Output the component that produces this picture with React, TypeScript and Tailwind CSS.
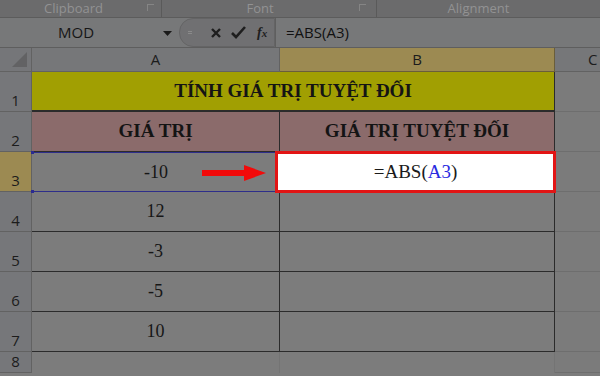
import { Fragment } from "react";

const sans = { fontFamily: '"Open Sans", "Noto Sans", sans-serif' };
const serif = { fontFamily: '"Liberation Serif", "Times New Roman", serif' };

const values = ["12", "-3", "-5", "10"];

const RowHead = ({ n, active = false, h = "h-[40px]" }: { n: number; active?: boolean; h?: string }) => (
  <div
    className={`${h} flex items-end justify-center pb-[3px] border-b border-r border-[#626262] text-[15px] leading-none text-[#1c1c1c] ${
      active ? "bg-[#9c8a52]" : "bg-[#76777a]"
    }`}
    style={sans}
  >
    {n}
  </div>
);

const CCell = ({ h = "h-[40px]" }: { h?: string }) => (
  <div className={`${h} bg-[#7b7b7b] border-b border-[#6e6e6e]`} />
);

export default function App() {
  return (
    <div className="w-[600px] h-[376px] overflow-hidden bg-[#7c7c7c] flex flex-col">
      {/* ribbon group labels */}
      <div className="h-[18px] shrink-0 flex bg-[#6b6b6c] border-b border-[#5c5c5c] text-[13px] leading-[17px] text-[#929293]" style={sans}>
        <div className="w-[162px] relative flex justify-center pr-[14px] border-r border-[#5a5a5a]">
          Clipboard
          <span className="absolute right-[7px] top-[4px] w-[7px] h-[7px] border-l border-t border-[#858585]" />
        </div>
        <div className="w-[215px] relative flex justify-center pr-[18px] border-r border-[#5a5a5a]">
          Font
          <span className="absolute right-[10px] top-[4px] w-[7px] h-[7px] border-l border-t border-[#858585]" />
        </div>
        <div className="flex-1 flex justify-center pr-[20px]">Alignment</div>
      </div>

      {/* formula bar */}
      <div className="h-[30px] shrink-0 flex items-stretch bg-[#777879] border-b border-[#5e5e5e]">
        <div className="w-[179px] relative flex items-center pl-[58px] text-[15px] text-[#161616]" style={sans}>
          MOD
          <svg className="absolute right-[7px] top-[13px]" width="9" height="5" viewBox="0 0 9 5">
            <path d="M0 0h9L4.5 5z" fill="#1a1a1a" />
          </svg>
        </div>
        <div className="w-[96px] flex items-center rounded-l-[14px] bg-[#707072] border border-[#646465] text-[#1e1e1e]">
          <span className="ml-[8px] w-[4px] h-[3px] border-t border-b border-[#8a8a8a]" />
          <svg className="ml-[18px]" width="12" height="12" viewBox="0 0 12 12">
            <path d="M2 2l8 8M10 2l-8 8" stroke="#1e1e1e" strokeWidth="2.4" />
          </svg>
          <svg className="ml-[9px]" width="15" height="13" viewBox="0 0 15 13">
            <path d="M1 7l4 4L14 1" stroke="#1e1e1e" strokeWidth="2.6" fill="none" />
          </svg>
          <span className="ml-[11px] italic font-bold text-[14px] leading-none" style={serif}>
            f<span className="text-[11px]">x</span>
          </span>
        </div>
        <div className="flex-1 flex items-center pl-[10px] text-[15px] text-[#111] border-l border-[#5f5f5f]" style={sans}>
          =ABS(A3)
        </div>
      </div>

      {/* sheet */}
      <div className="grid grid-cols-[32px_248px_275px_75px] relative">
        {/* column headers */}
        <div className="h-[24px] bg-[#757679] border-r border-b border-[#626262] relative">
          <svg className="absolute right-[4px] bottom-[4px]" width="15" height="15" viewBox="0 0 15 15">
            <path d="M15 0v15H0z" fill="#626264" />
          </svg>
        </div>
        <div className="h-[24px] bg-[#767779] border-r border-b border-[#626262] flex items-center justify-center text-[15px] text-[#1c1c1c]" style={sans}>A</div>
        <div className="h-[24px] bg-[#9c8a52] border-r border-b border-[#6a5e3a] flex items-center justify-center text-[15px] text-[#1c1c1c]" style={sans}>B</div>
        <div className="h-[24px] bg-[#767779] border-b border-[#626262] flex items-center pl-[33px] text-[15px] text-[#1c1c1c]" style={sans}>C</div>

        {/* row 1 */}
        <RowHead n={1} />
        <div className="col-span-2 h-[40px] bg-[#a19f02] border-b-2 border-r border-[#2b2b2b] flex items-center justify-center font-bold text-[19px] text-[#141414]" style={serif}>
          TÍNH GIÁ TRỊ TUYỆT ĐỐI
        </div>
        <CCell />

        {/* row 2 */}
        <RowHead n={2} />
        <div className="h-[40px] bg-[#8b6b6b] border-r border-b border-[#2b2b2b] flex items-center justify-center font-bold text-[19px] text-[#141414]" style={serif}>
          GIÁ TRỊ
        </div>
        <div className="h-[40px] bg-[#8b6b6b] border-r border-b border-[#2b2b2b] flex items-center justify-center font-bold text-[19px] text-[#141414]" style={serif}>
          GIÁ TRỊ TUYỆT ĐỐI
        </div>
        <CCell />

        {/* row 3 */}
        <RowHead n={3} active />
        <div className="h-[40px] relative flex items-center justify-center text-[18px] text-[#161616] border-y border-[#2e2e8a]" style={serif}>
          -10
          <span className="absolute -left-[1px] -top-[2px] w-[3px] h-[3px] bg-[#2a2a90]" />
          <span className="absolute -left-[1px] -bottom-[2px] w-[3px] h-[3px] bg-[#2a2a90]" />
          <svg className="absolute left-[170px] top-[12px]" width="64" height="16" viewBox="0 0 64 16">
            <path d="M0 5h42V0l22 8-22 8v-5H0z" fill="#f20a0a" />
          </svg>
        </div>
        <div className="h-[40px] relative">
          <div className="absolute -left-[5px] -top-[1px] -right-[1px] -bottom-[1px] bg-white border-[3px] border-[#e21515] flex items-center justify-center text-[19px] text-[#1a1a1a]" style={serif}>
            =ABS(<span className="text-[#2a2adf]">A3</span>)
          </div>
        </div>
        <CCell />

        {/* rows 4-7 */}
        {values.map((v, i) => (
          <Fragment key={v}>
            <RowHead n={i + 4} />
            <div className="h-[40px] border-r border-b border-[#2b2b2b] flex items-center justify-center text-[18px] text-[#161616]" style={serif}>
              {v}
            </div>
            <div className="h-[40px] border-r border-b border-[#2b2b2b]" />
            <CCell />
          </Fragment>
        ))}

        {/* row 8 */}
        <RowHead n={8} h="h-[21px]" />
        <div className="h-[21px] border-r border-[#747474]" />
        <div className="h-[21px] border-r border-[#747474]" />
        <CCell h="h-[21px]" />
      </div>
    </div>
  );
}
